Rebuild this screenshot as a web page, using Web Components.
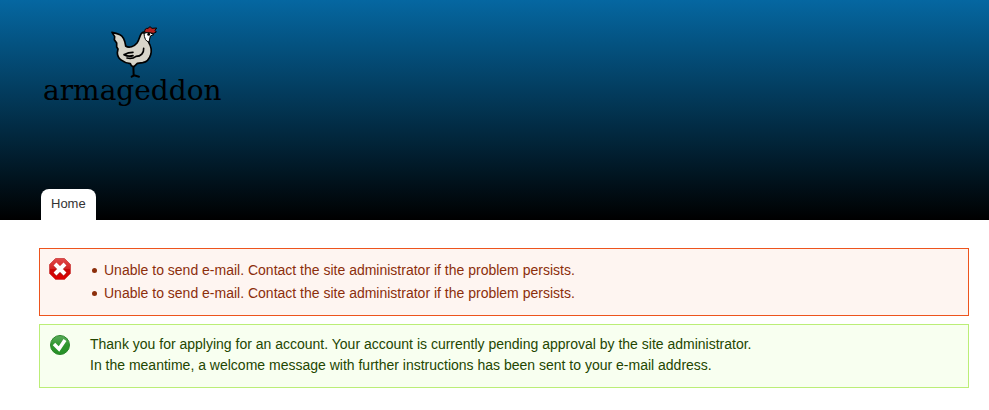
<!DOCTYPE html>
<html lang="en">
<head>
<meta charset="utf-8">
<title>armageddon</title>
<style>
body { margin: 0; background: #fff; font: 14px/21px "Liberation Sans", Arial, sans-serif; }
</style>
</head>
<body>
<site-header>
  <site-logo></site-logo>
  <nav-tab slot="nav" href="#home">Home</nav-tab>
</site-header>
<message-list>
  <status-message type="error">
    <message-item>Unable to send e-mail. Contact the site administrator if the problem persists.</message-item>
    <message-item>Unable to send e-mail. Contact the site administrator if the problem persists.</message-item>
  </status-message>
  <status-message type="status">Thank you for applying for an account. Your account is currently pending approval by the site administrator.<br>In the meantime, a welcome message with further instructions has been sent to your e-mail address.</status-message>
</message-list>
<script>
function define(name, html, setup) {
  const template = document.createElement('template');
  template.innerHTML = html;
  customElements.define(name, class extends HTMLElement {
    constructor() {
      super();
      this.attachShadow({ mode: 'open' }).append(template.content.cloneNode(true));
    }
    connectedCallback() { if (setup) setup(this, this.shadowRoot); }
  });
}

define('site-header', `
<style>
:host { display: block; background: linear-gradient(#0567a1, #000); }
header { display: flex; flex-direction: column; justify-content: space-between; align-items: flex-start; min-height: 195px; padding: 25px 41px 0; }
nav { display: flex; }
</style>
<header><slot></slot><nav aria-label="Main menu"><slot name="nav"></slot></nav></header>`);

define('site-logo', `
<style>
:host { display: block; padding-left: 2px; }
a { display: flex; flex-direction: column; align-items: center; color: #000; text-decoration: none; }
svg { display: block; width: 50px; height: 54px; }
span { font: 28px/32px "DejaVu Serif", serif; margin-top: -4px; }
</style>
<a href="#home" aria-label="armageddon">
<svg viewBox="20 16 150 162" stroke-linecap="round" stroke-linejoin="round" stroke="#000" stroke-width="5">
  <path d="M99 138 100 168M94 171l7-4 15 4" fill="none" stroke-width="6"/>
  <path d="M35 38Q48 40 59 45C73 52 74 68 76 79 86 87 102 80 110 70 119 58 117 43 128 38 140 33 148 39 148 48L145 68C151 78 155 91 151 105 147 118 139 127 127 129L111 131 101 141 93 138 90 132C67 129 51 116 51 99L53 88 49 82 49 70 42 60 43 51Z" fill="#d8d5ca"/>
  <path d="M133 37q-1-12 10-11l6-5 6 5 14-1-5 7 4 5-8 4-12-1Z" fill="#b5221f" stroke-width="3"/>
  <path d="M131 41q10-5 20-1l9 5-10 4-4 18q-14-2-15-26Z" fill="#fff" stroke-width="3"/>
  <circle cx="145" cy="44" r="2"/>
  <path d="M71 105Q84 98 98 98M71 105Q84 112 98 108M80 115Q96 119 107 110C122 110 131 100 130 86" fill="none"/>
</svg>
<span>armageddon</span></a>`);

define('nav-tab', `
<style>
:host { display: block; }
a { display: block; padding: 4px 10px 6px; border-radius: 8px 8px 0 0; background: #fff; color: #333; font-size: 13px; line-height: 21px; text-decoration: none; }
</style>
<a><slot></slot></a>`, (host, root) => {
  root.querySelector('a').href = host.getAttribute('href');
});

define('message-list', `
<style>
:host { display: flex; flex-direction: column; gap: 8px; padding: 28px 20px 22px 39px; }
</style>
<slot></slot>`);

const icons = {
  error: `<svg viewBox="0 0 22 22"><defs><linearGradient id="g" x2="0" y2="1"><stop stop-color="#e04a4a"/><stop offset=".5" stop-color="#d42424"/><stop offset=".52" stop-color="#c80a0a"/><stop offset="1" stop-color="#e00000"/></linearGradient></defs>
  <path d="M6.5.5h9l6 6v9l-6 6h-9l-6-6v-9Z" fill="url(#g)" stroke="#d25050"/><path d="m6 7 10 10M16 7 6 17" stroke="#8a3030" stroke-width="4" opacity=".5"/><path d="m6 6 10 10M16 6 6 16" stroke="#fff" stroke-width="4"/></svg>`,
  status: `<svg viewBox="0 0 22 22"><defs><linearGradient id="g" x2="0" y2="1"><stop stop-color="#5cac5c"/><stop offset=".5" stop-color="#2f962f"/><stop offset="1" stop-color="#259025"/></linearGradient></defs>
  <circle cx="11" cy="11" r="9.500" fill="url(#g)" stroke="#2b862b"/><path d="m5 10 5 5 6-9" fill="none" stroke="#fff" stroke-width="3.500"/></svg>`
};

define('status-message', `
<style>
:host { display: flex; align-items: flex-start; gap: 19px; padding: 9px; border: 1px solid #be7; background: #f8fff0; color: #234600; }
:host([type=error]) { border-color: #ed541d; background: #fef5f1; color: #8c2e0b; }
.icon, svg { display: block; width: 22px; height: 22px; }
.body { padding-bottom: 2px; }
:host([type=error]) .body { padding: 2px 0 0; }
</style>
<span class="icon"></span><div class="body"><slot></slot></div>`, (host, root) => {
  const error = host.getAttribute('type') === 'error';
  root.querySelector('.icon').innerHTML = icons[error ? 'error' : 'status'];
  host.setAttribute('role', error ? 'alert' : 'status');
  if (error) root.querySelector('.body').setAttribute('role', 'list');
});

define('message-item', `
<style>
:host { display: flex; align-items: center; gap: 7px; padding: 0 0 2px 2px; }
:host::before { content: ""; flex: none; width: 5px; height: 5px; border-radius: 50%; background: currentColor; }
</style>
<span><slot></slot></span>`, host => host.setAttribute('role', 'listitem'));
</script>
</body>
</html>
